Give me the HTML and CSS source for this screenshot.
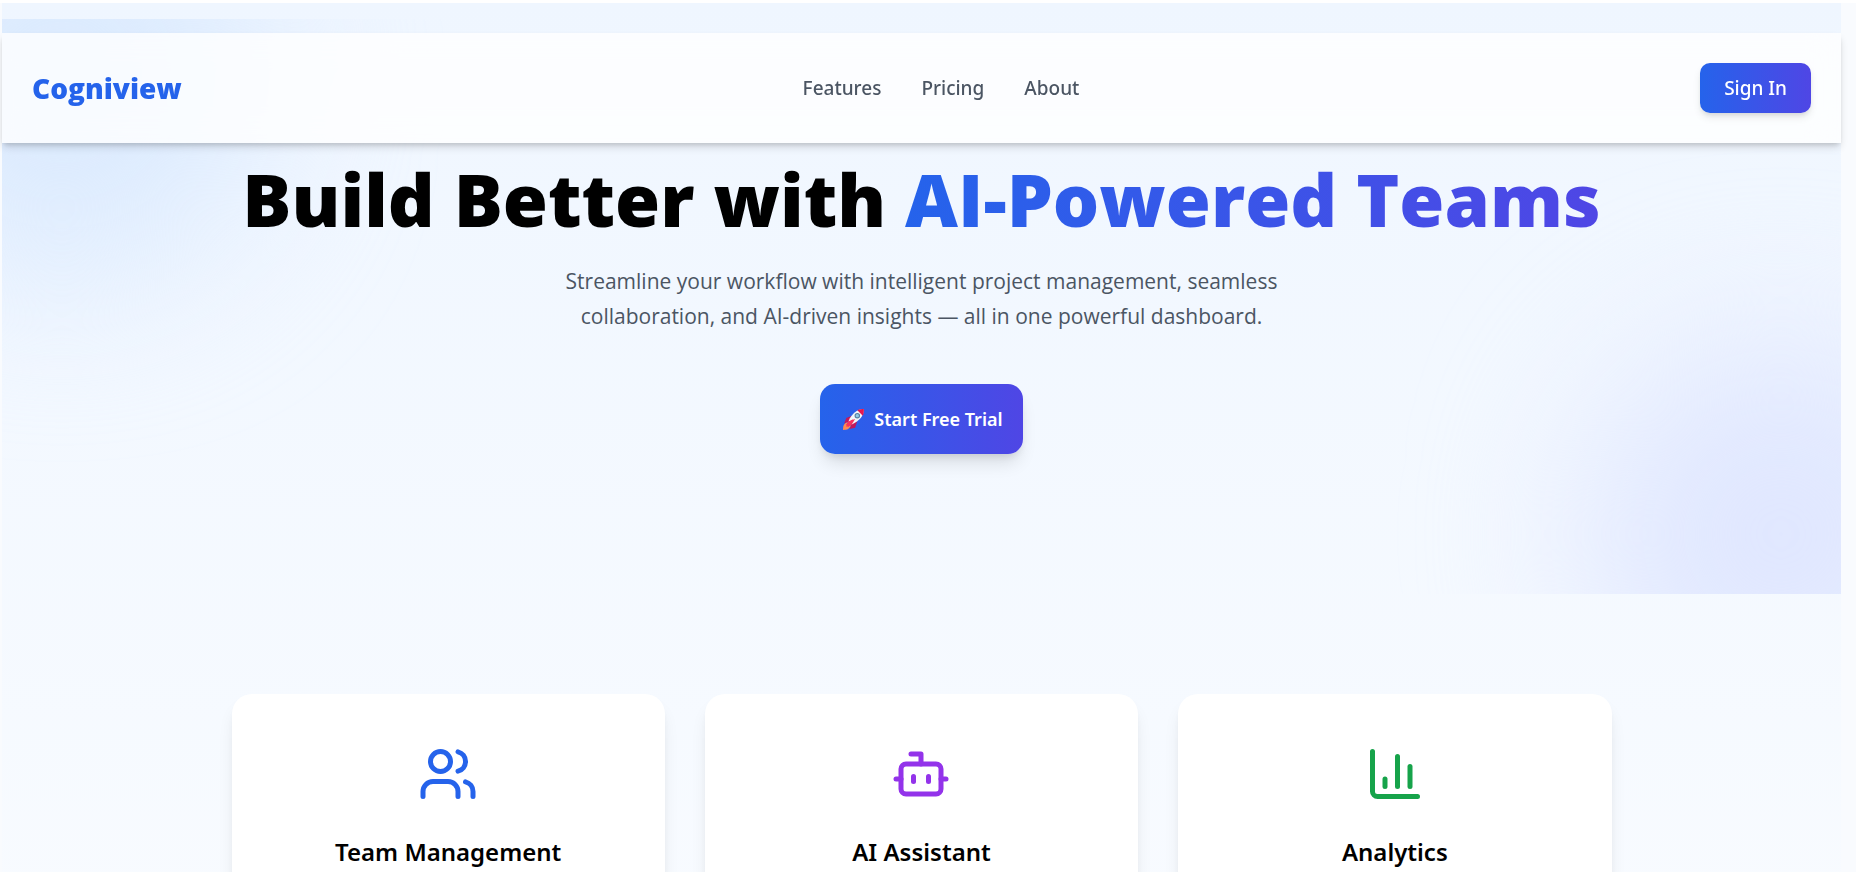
FILE: index.html
```html
<!DOCTYPE html>
<html lang="en">
<head>
<meta charset="utf-8">
<meta name="viewport" content="width=device-width, initial-scale=1">
<title>Cogniview</title>
<link rel="stylesheet" href="styles.css">
</head>
<body>
<div class="page">
  <header class="navbar">
    <a class="logo" href="#">Cogniview</a>
    <nav class="nav-links" aria-label="Main">
      <a href="#features">Features</a>
      <a href="#pricing">Pricing</a>
      <a href="#about">About</a>
    </nav>
    <button class="btn btn-signin" type="button">Sign In</button>
  </header>
  <main>
    <section class="hero">
      <div class="blob blob-blue"></div>
      <div class="blob blob-indigo"></div>
      <div class="hero-content">
        <h1 class="hero-title">Build Better with <span class="accent">AI-Powered Teams</span></h1>
        <p class="hero-text">Streamline your workflow with intelligent project management, seamless collaboration, and AI-driven insights — all in one powerful dashboard.</p>
        <button class="btn btn-trial" type="button">
          <svg class="rocket" viewBox="0 0 20 20" aria-hidden="true"><path fill="#c2185b" d="M8 7 3 9 1 14l5-2zM13 12l-2 6-5 1 2-5z"/><path fill="#ff8a50" d="M4 13c-3 1-4 3-4 7 4 0 6-1 7-4z"/><path fill="#f3f5f8" d="M19 1c-6 0-11 4-14 11l3 3c7-3 11-8 11-14z"/><path fill="#e5174f" d="M19 1c-2 0-4 0-6 1l5 5c1-2 1-4 1-6zM9 10l-6 5 2 2z"/><path fill="#f8315e" d="M5 12c-1 1-2 3-2 5 2 0 4-1 5-2l3-5z"/><circle cx="13" cy="7" r="2" fill="#8ecae6" stroke="#5a7da0"/></svg>
          Start Free Trial
        </button>
      </div>
    </section>
    <section class="features" id="features">
      <article class="card">
        <svg class="icon icon-blue" viewBox="0 0 24 24" aria-hidden="true"><path d="M16 21v-2a4 4 0 0 0-4-4H6a4 4 0 0 0-4 4v2"/><circle cx="9" cy="7" r="4"/><path d="M22 21v-2a4 4 0 0 0-3-3.87"/><path d="M16 3.13a4 4 0 0 1 0 7.75"/></svg>
        <h2 class="card-title">Team Management</h2>
      </article>
      <article class="card">
        <svg class="icon icon-purple" viewBox="0 0 24 24" aria-hidden="true"><path d="M12 8V4H8"/><rect width="16" height="12" x="4" y="8" rx="2"/><path d="M2 14h2"/><path d="M20 14h2"/><path d="M15 13v2"/><path d="M9 13v2"/></svg>
        <h2 class="card-title">AI Assistant</h2>
      </article>
      <article class="card">
        <svg class="icon icon-green" viewBox="0 0 24 24" aria-hidden="true"><path d="M3 3v16a2 2 0 0 0 2 2h16"/><path d="M18 17V9"/><path d="M13 17V5"/><path d="M8 17v-3"/></svg>
        <h2 class="card-title">Analytics</h2>
      </article>
    </section>
  </main>
</div>
</body>
</html>
```
FILE: styles.css
```css
* {
  box-sizing: border-box;
}

html {
  background: #f9fbfe;
}

body {
  margin: 0;
  height: 100vh;
  overflow: hidden;
  border-top: 3px solid #fff;
  padding: 0 15px 0 2px;
  font-family: "Noto Sans", "Open Sans", sans-serif;
  color: #000;
}

.page {
  position: relative;
  min-height: 100%;
  padding-top: 16px;
  background: linear-gradient(#eff6ff, #f8fbff);
}

.navbar {
  position: absolute;
  z-index: 2;
  top: 30px;
  left: 0;
  right: 0;
  display: flex;
  justify-content: space-between;
  align-items: center;
  padding: 30px;
  background: rgba(255, 255, 255, 0.8);
  box-shadow: 0 5px 8px -1px rgba(0, 0, 0, 0.14), 0 3px 5px -2px rgba(0, 0, 0, 0.14);
  backdrop-filter: blur(15px);
}

.logo {
  color: #2563eb;
  font-family: "Open Sans", "Noto Sans", sans-serif;
  font-size: 28px;
  line-height: 40px;
  font-weight: 800;
  text-decoration: none;
}

.nav-links {
  display: flex;
  gap: 40px;
}

.nav-links a {
  color: #4b5563;
  font-size: 19px;
  line-height: 30px;
  font-weight: 500;
  text-decoration: none;
}

.btn {
  border: 0;
  color: #fff;
  font-family: inherit;
  background: linear-gradient(to right, #2563eb, #4f46e5);
  cursor: pointer;
}

.btn-signin {
  padding: 10px 24px;
  border-radius: 10px;
  font-size: 19px;
  line-height: 30px;
  font-weight: 500;
  box-shadow: 0 5px 8px -1px rgba(0, 0, 0, 0.1), 0 3px 5px -2px rgba(0, 0, 0, 0.1);
}

.hero {
  position: relative;
  overflow: hidden;
  padding: 139px 30px 140px;
  text-align: center;
}

.blob {
  position: absolute;
  width: 400px;
  height: 400px;
  border-radius: 50%;
  filter: blur(80px);
}

.blob-blue {
  top: -140px;
  left: -140px;
  background: #dbeafe;
}

.blob-indigo {
  right: -140px;
  bottom: -140px;
  background: #e0e7ff;
}

.hero-content {
  position: relative;
  display: flex;
  flex-direction: column;
  align-items: center;
}

.hero-title {
  margin: 0;
  font-family: "Open Sans", "Noto Sans", sans-serif;
  font-size: 73px;
  line-height: 82px;
  font-weight: 800;
}

.accent {
  color: transparent;
  background: linear-gradient(to right, #2563eb, #4f46e5);
  background-clip: text;
}

.hero-text {
  max-width: 740px;
  margin: 24px 0 50px;
  color: #4b5563;
  font-family: "Open Sans", "Noto Sans", sans-serif;
  font-size: 21px;
  line-height: 35px;
}

.btn-trial {
  display: flex;
  align-items: center;
  gap: 9px;
  padding: 20px 20px 20px 23px;
  border-radius: 15px;
  font-size: 18px;
  line-height: 30px;
  font-weight: 600;
  box-shadow: 0 12px 18px -4px rgba(0, 0, 0, 0.12), 0 5px 8px -4px rgba(0, 0, 0, 0.12);
}

.rocket {
  width: 22px;
  height: 22px;
}

.features {
  display: grid;
  grid-template-columns: repeat(3, 1fr);
  gap: 40px;
  max-width: 1380px;
  margin: 0 auto;
  padding-top: 100px;
}

.card {
  display: flex;
  flex-direction: column;
  align-items: center;
  gap: 30px;
  padding: 50px;
  border-radius: 20px;
  background: #fff;
  box-shadow: 0 12px 18px -4px rgba(0, 0, 0, 0.1), 0 5px 8px -5px rgba(0, 0, 0, 0.1);
}

.icon {
  width: 60px;
  height: 60px;
  fill: none;
  stroke: currentColor;
  stroke-width: 2;
  stroke-linecap: round;
  stroke-linejoin: round;
}

.icon-blue {
  color: #2563eb;
}

.icon-purple {
  color: #9333ea;
}

.icon-green {
  color: #16a34a;
}

.card-title {
  margin: 0;
  font-size: 24px;
  line-height: 35px;
  font-weight: 600;
}
```
